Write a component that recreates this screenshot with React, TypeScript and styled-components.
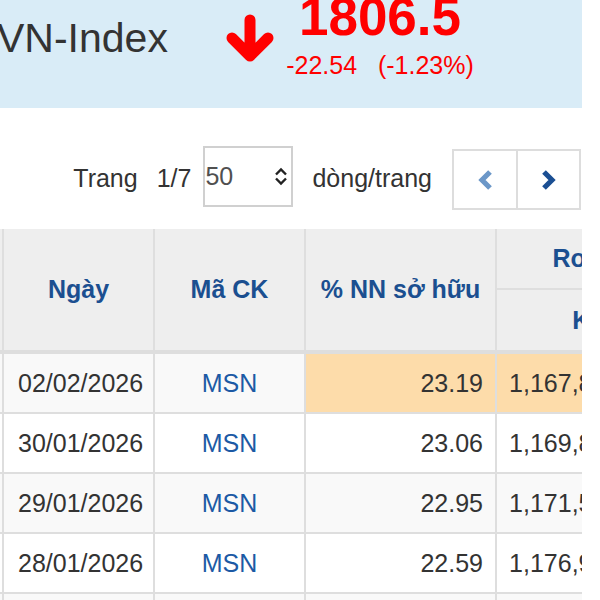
import React from "react";
import styled, { createGlobalStyle } from "styled-components";

const GlobalStyle = createGlobalStyle`
  html, body { margin: 0; padding: 0; background: #ffffff; }
  body { font-family: "Liberation Sans", Arial, Helvetica, sans-serif; overflow: hidden; }
`;

const Page = styled.div`
  width: 600px;
  height: 600px;
  overflow: hidden;
  background: #ffffff;
`;

const Banner = styled.header`
  width: 582px;
  height: 108px;
  background: #d9ecf7;
  display: flex;
  align-items: flex-start;
  overflow: hidden;
`;

const IndexName = styled.h1`
  flex: 0 0 229px;
  margin: 18px 0 0 -3px;
  font-size: 41px;
  font-weight: 400;
  line-height: 1;
  color: #333333;
  white-space: nowrap;
`;

const ArrowIcon = styled.svg`
  flex: 0 0 48px;
  margin-top: 14px;
`;

const ValueBlock = styled.div`
  margin-left: 12px;
  width: 188px;
  display: flex;
  flex-direction: column;
  align-items: center;
  color: #ff0000;
`;

const BigValue = styled.div`
  margin-top: -10px;
  font-size: 53px;
  font-weight: 700;
  line-height: 53px;
  white-space: nowrap;
`;

const Change = styled.div`
  margin-top: 10px;
  font-size: 25px;
  line-height: 25px;
  white-space: pre;
`;

const Pager = styled.div`
  width: 582px;
  box-sizing: border-box;
  padding-right: 1px;
  margin-top: 38px;
  height: 64px;
  display: flex;
  align-items: center;
  justify-content: flex-end;
  font-size: 25px;
  color: #333333;
`;

const PagerText = styled.span<{ $gap: number }>`
  margin-right: ${(p) => p.$gap}px;
  white-space: nowrap;
`;

const SelectBox = styled.div`
  align-self: flex-start;
  width: 90px;
  height: 61px;
  box-sizing: border-box;
  border: 2px solid #d0d0d0;
  margin-right: 19px;
  padding: 0 3px 0 0;
  display: flex;
  align-items: center;
  justify-content: space-between;
  color: #505050;
  font-size: 25px;
`;

const ButtonGroup = styled.div`
  align-self: flex-end;
  display: flex;
  height: 61px;
  box-sizing: border-box;
  border: 2px solid #dddddd;
`;

const PageButton = styled.button<{ $divider?: boolean; $w: number }>`
  width: ${(p) => p.$w}px;
  height: 100%;
  margin: 0;
  padding: 0;
  background: #ffffff;
  border: none;
  border-left: ${(p) => (p.$divider ? "2px solid #dddddd" : "none")};
  display: flex;
  align-items: center;
  justify-content: center;
  cursor: pointer;
`;

const TableWrap = styled.div`
  width: 582px;
  margin-top: 19px;
  overflow: hidden;
`;

const Table = styled.table`
  margin-left: -36px;
  border-collapse: separate;
  border-spacing: 0;
  table-layout: fixed;
  width: 803px;
  font-size: 25px;
`;

const Th = styled.th<{ $bottom?: number }>`
  background: #eeeeee;
  color: #1b4f90;
  font-weight: 700;
  text-align: center;
  vertical-align: middle;
  padding: 0;
  border-right: 2px solid #dedede;
  border-bottom: ${(p) => p.$bottom ?? 4}px solid #dedede;
  white-space: nowrap;
  overflow: hidden;
`;

const HeadRow = styled.tr<{ $lh: number }>`
  & > th {
    line-height: ${(p) => p.$lh}px;
  }
`;

const BodyRow = styled.tr<{ $odd: boolean }>`
  background: ${(p) => (p.$odd ? "#f9f9f9" : "#ffffff")};
`;

const Td = styled.td<{ $align: "left" | "center" | "right"; $hl?: boolean; $code?: boolean }>`
  text-align: ${(p) => p.$align};
  padding: 0 ${(p) => (p.$align === "right" ? "12px" : "0")} 0 ${(p) => (p.$align === "left" ? "14px" : "0")};
  line-height: 58px;
  border-right: 2px solid #dedede;
  border-bottom: 2px solid #dedede;
  color: ${(p) => (p.$code ? "#1c5aa5" : "#333333")};
  background: ${(p) => (p.$hl ? "#fddcaa" : "transparent")};
  white-space: nowrap;
  overflow: hidden;
`;

const rows = [
  { no: 1, date: "02/02/2026", code: "MSN", pct: "23.19", room: "1,167,867,890", hl: true },
  { no: 2, date: "30/01/2026", code: "MSN", pct: "23.06", room: "1,169,867,890", hl: false },
  { no: 3, date: "29/01/2026", code: "MSN", pct: "22.95", room: "1,171,567,890", hl: false },
  { no: 4, date: "28/01/2026", code: "MSN", pct: "22.59", room: "1,176,967,890", hl: false },
  { no: 5, date: "27/01/2026", code: "MSN", pct: "22.41", room: "1,179,067,890", hl: false },
];

const Chevron = ({ dir, color }: { dir: "left" | "right"; color: string }) => (
  <svg width="18" height="22" viewBox="0 0 18 22">
    <polyline
      points={dir === "left" ? "14,3 6,11 14,19" : "4,3 12,11 4,19"}
      fill="none"
      stroke={color}
      strokeWidth="5.2"
      strokeLinejoin="miter"
    />
  </svg>
);

export default function App() {
  return (
    <Page>
      <GlobalStyle />
      <Banner>
        <IndexName>VN-Index</IndexName>
        <ArrowIcon width="48" height="48" viewBox="0 0 48 48">
          <path
            d="M24 6 V40 M6 24 L24 42 L42 24"
            fill="none"
            stroke="#ff0000"
            strokeWidth="11"
            strokeLinecap="round"
            strokeLinejoin="round"
          />
        </ArrowIcon>
        <ValueBlock>
          <BigValue>1806.5</BigValue>
          <Change>{"-22.54   (-1.23%)"}</Change>
        </ValueBlock>
      </Banner>

      <Pager>
        <PagerText $gap={19}>Trang</PagerText>
        <PagerText $gap={12}>1/7</PagerText>
        <SelectBox>
          <span>50</span>
          <svg width="14" height="19" viewBox="0 0 14 19">
            <polyline points="2,7.5 7,2.5 12,7.5" fill="none" stroke="#222" strokeWidth="2.4" />
            <polyline points="2,11.5 7,16.5 12,11.5" fill="none" stroke="#222" strokeWidth="2.4" />
          </svg>
        </SelectBox>
        <PagerText $gap={20}>dòng/trang</PagerText>
        <ButtonGroup>
          <PageButton $w={62} aria-label="Trang trước">
            <Chevron dir="left" color="#6b97c8" />
          </PageButton>
          <PageButton $w={63} $divider aria-label="Trang sau">
            <Chevron dir="right" color="#1b4f93" />
          </PageButton>
        </ButtonGroup>
      </Pager>

      <TableWrap>
        <Table>
          <colgroup>
            <col style={{ width: 40 }} />
            <col style={{ width: 151 }} />
            <col style={{ width: 151 }} />
            <col style={{ width: 191 }} />
            <col style={{ width: 186 }} />
            <col style={{ width: 84 }} />
          </colgroup>
          <thead>
            <HeadRow $lh={59}>
              <Th rowSpan={2}>#</Th>
              <Th rowSpan={2}>Ngày</Th>
              <Th rowSpan={2}>Mã CK</Th>
              <Th rowSpan={2}>% NN sở hữu</Th>
              <Th colSpan={2} $bottom={2}>Room còn lại</Th>
            </HeadRow>
            <HeadRow $lh={60}>
              <Th>KL</Th>
              <Th>%</Th>
            </HeadRow>
          </thead>
          <tbody>
            {rows.map((r, i) => (
              <BodyRow key={r.date} $odd={i % 2 === 0}>
                <Td $align="center">{r.no}</Td>
                <Td $align="left">{r.date}</Td>
                <Td $align="center" $code>{r.code}</Td>
                <Td $align="right" $hl={r.hl}>{r.pct}</Td>
                <Td $align="right" $hl={r.hl}>{r.room}</Td>
                <Td $align="right" $hl={r.hl}>49.0</Td>
              </BodyRow>
            ))}
          </tbody>
        </Table>
      </TableWrap>
    </Page>
  );
}
